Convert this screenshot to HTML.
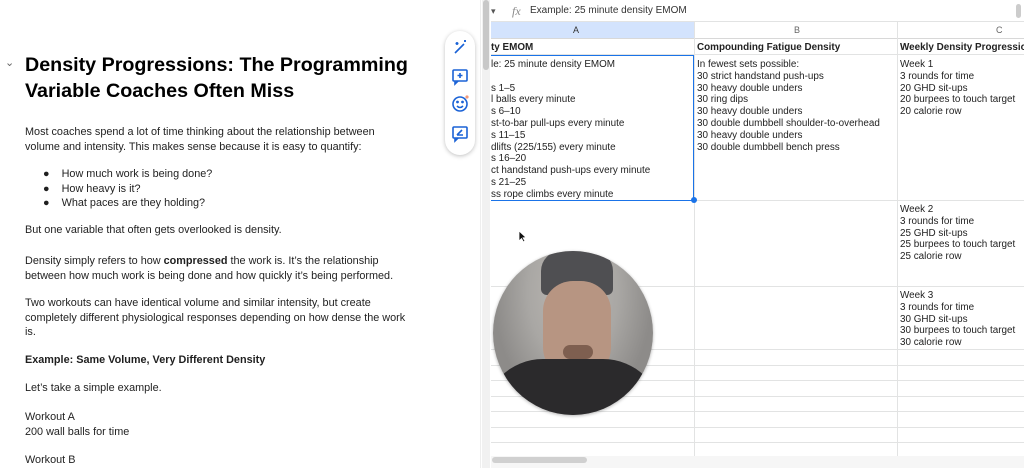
<!DOCTYPE html><html><head><style>
body{margin:0;width:1024px;height:468px;overflow:hidden;background:#fff;font-family:"Liberation Sans",Arial,sans-serif;position:relative}
.a{position:absolute;white-space:nowrap}
.d{font-size:10.85px;color:#1f1f1f}
.s{font-size:9.9px;color:#222;line-height:11.8px}
.h{position:absolute;height:1px;background:#e2e3e3}
.v{position:absolute;width:1px;background:#e2e3e3}
</style></head><body>
<div class="a" style="left:0;top:0;width:480px;height:468px;background:#fff;border-right:1px solid #eee"></div>
<div class="a" style="left:5px;top:56px;font-size:11px;color:#666">⌄</div>
<div class="a" style="left:25px;top:52px;font-size:19.7px;font-weight:bold;line-height:26px;color:#000">Density Progressions: The Programming<br>Variable Coaches Often Miss</div>
<div class="a d" style="left:25px;top:125px;line-height:14.5px">Most coaches spend a lot of time thinking about the relationship between<br>volume and intensity. This makes sense because it is easy to quantify:</div>
<div class="a d" style="left:43px;top:167px;line-height:14.5px">●&nbsp;&nbsp;&nbsp;&nbsp;How much work is being done?<br>●&nbsp;&nbsp;&nbsp;&nbsp;How heavy is it?<br>●&nbsp;&nbsp;&nbsp;&nbsp;What paces are they holding?</div>
<div class="a d" style="left:25px;top:224px">But one variable that often gets overlooked is density.</div>
<div class="a d" style="left:25px;top:254px;line-height:14.5px">Density simply refers to how <b>compressed</b> the work is. It’s the relationship<br>between how much work is being done and how quickly it’s being performed.</div>
<div class="a d" style="left:25px;top:296px;line-height:14.5px">Two workouts can have identical volume and similar intensity, but create<br>completely different physiological responses depending on how dense the work<br>is.</div>
<div class="a d" style="left:25px;top:354px;font-weight:bold">Example: Same Volume, Very Different Density</div>
<div class="a d" style="left:25px;top:382px">Let’s take a simple example.</div>
<div class="a d" style="left:25px;top:410px;line-height:14.5px">Workout A<br>200 wall balls for time</div>
<div class="a d" style="left:25px;top:454px">Workout B</div>
<div class="a" style="left:445px;top:31px;width:30px;height:124px;background:#fff;border-radius:15px;box-shadow:0 1px 4px rgba(0,0,0,.25)"></div>
<svg class="a" style="left:450px;top:38px" width="22" height="112" viewBox="0 0 22 112" fill="none" stroke="#1a62d6" stroke-width="1.6">
<path d="M5 15 L14 6 M7 4 v3 M5.5 5.5 h3 M15 2 v2 M14 3 h2"/>
<rect x="3" y="32" width="14" height="11" rx="1"/><path d="M5 43 v3 l3 -3 M10 35 v5 M7.5 37.5 h5"/>
<circle cx="10" cy="66" r="7"/><path d="M7 68 q3 3 6 0"/><circle cx="7.5" cy="64" r=".6" fill="#1a62d6"/><circle cx="12.5" cy="64" r=".6" fill="#1a62d6"/>
<circle cx="17" cy="59" r="1.6" fill="#f29a7a" stroke="none"/>
<rect x="3" y="89" width="14" height="11" rx="1"/><path d="M5 100 v3 l3 -3 M7 97 l5 -5 M7 97 h6"/>
</svg>
<div class="a" style="left:482px;top:0;width:8px;height:468px;background:#f1f1f1"></div>
<div class="a" style="left:483px;top:0;width:6px;height:70px;background:#c8c8c8;border-radius:3px"></div>
<div class="a" style="left:491px;top:0;width:533px;height:21px;background:#fff;border-bottom:1px solid #e2e3e3"></div>
<div class="a" style="left:491px;top:6px;font-size:9px;color:#555">▾</div>
<div class="a" style="left:512px;top:4px;font-size:12px;font-style:italic;color:#888;font-family:'Liberation Serif',serif">fx</div>
<div class="a" style="left:530px;top:5px;font-size:10px;color:#333">Example: 25 minute density EMOM</div>
<div class="a" style="left:1016px;top:4px;width:5px;height:14px;background:#ccc;border-radius:3px"></div>
<div class="a" style="left:491px;top:22px;width:533px;height:16px;background:#fff;border-bottom:1px solid #d8d8d8"></div>
<div class="a" style="left:491px;top:22px;width:203px;height:16px;background:#d3e3fd"></div>
<div class="a" style="left:573px;top:25px;font-size:9px;color:#333">A</div>
<div class="a" style="left:794px;top:25px;font-size:9px;color:#666">B</div>
<div class="a" style="left:996px;top:25px;font-size:9px;color:#666">C</div>
<div class="v" style="left:694px;top:22px;height:434px"></div>
<div class="v" style="left:897px;top:22px;height:434px"></div>
<div class="h" style="left:491px;top:54px;width:533px"></div>
<div class="h" style="left:491px;top:200px;width:533px"></div>
<div class="h" style="left:491px;top:286px;width:533px"></div>
<div class="h" style="left:491px;top:349px;width:533px"></div>
<div class="h" style="left:491px;top:365px;width:533px"></div>
<div class="h" style="left:491px;top:380px;width:533px"></div>
<div class="h" style="left:491px;top:396px;width:533px"></div>
<div class="h" style="left:491px;top:411px;width:533px"></div>
<div class="h" style="left:491px;top:427px;width:533px"></div>
<div class="h" style="left:491px;top:442px;width:533px"></div>
<div class="a s" style="left:491px;top:42px;font-weight:bold">ty EMOM</div>
<div class="a s" style="left:697px;top:42px;font-weight:bold">Compounding Fatigue Density</div>
<div class="a s" style="left:900px;top:42px;font-weight:bold">Weekly Density Progression</div>
<div class="a" style="left:491px;top:55px;width:202px;height:144px;border:1px solid #1a73e8;border-left:none"></div>
<div class="a" style="left:691px;top:197px;width:6px;height:6px;border-radius:50%;background:#1a73e8"></div>
<div class="a s" style="left:491px;top:59px">le: 25 minute density EMOM<br>&nbsp;<br>s 1–5<br>l balls every minute<br>s 6–10<br>st-to-bar pull-ups every minute<br>s 11–15<br>dlifts (225/155) every minute<br>s 16–20<br>ct handstand push-ups every minute<br>s 21–25<br>ss rope climbs every minute</div>
<div class="a s" style="left:697px;top:59px">In fewest sets possible:<br>30 strict handstand push-ups<br>30 heavy double unders<br>30 ring dips<br>30 heavy double unders<br>30 double dumbbell shoulder-to-overhead<br>30 heavy double unders<br>30 double dumbbell bench press</div>
<div class="a s" style="left:900px;top:59px">Week 1<br>3 rounds for time<br>20 GHD sit-ups<br>20 burpees to touch target<br>20 calorie row</div>
<div class="a s" style="left:900px;top:204px">Week 2<br>3 rounds for time<br>25 GHD sit-ups<br>25 burpees to touch target<br>25 calorie row</div>
<div class="a s" style="left:900px;top:290px">Week 3<br>3 rounds for time<br>30 GHD sit-ups<br>30 burpees to touch target<br>30 calorie row</div>
<svg class="a" style="left:518px;top:230px" width="9" height="13" viewBox="0 0 9 13"><path d="M1 1 L1 11 L3.5 8.5 L5.5 12 L7 11 L5 7.8 L8 7.5 Z" fill="#111" stroke="#fff" stroke-width=".8"/></svg>
<div class="a" style="left:493px;top:251px;width:160px;height:164px;border-radius:50%;overflow:hidden;background:radial-gradient(ellipse at 50% 25%,#bdb9b4 0%,#a9a7a4 40%,#8d8b89 70%);box-shadow:0 1px 3px rgba(0,0,0,.3)">
<div style="position:absolute;left:48px;top:0;width:72px;height:44px;background:#4f4f52;border-radius:20px 20px 6px 6px"></div>
<div style="position:absolute;left:50px;top:30px;width:68px;height:100px;background:#b79582;border-radius:30px 30px 34px 34px"></div>
<div style="position:absolute;left:70px;top:94px;width:30px;height:14px;background:#7e5f50;border-radius:8px"></div>
<div style="position:absolute;left:-10px;top:108px;width:180px;height:80px;background:#2b2a2c;border-radius:60px 60px 0 0"></div>
</div>
<div class="a" style="left:491px;top:456px;width:533px;height:12px;background:#f6f6f6"></div>
<div class="a" style="left:492px;top:457px;width:95px;height:6px;background:#d0d0d0;border-radius:3px"></div>
</body></html>
